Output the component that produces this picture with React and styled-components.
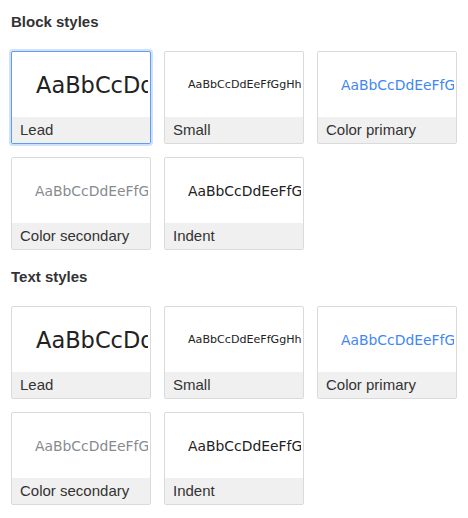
import React from "react";
import styled, { createGlobalStyle, css } from "styled-components";

const Global = createGlobalStyle`
  html, body { margin: 0; padding: 0; background: #ffffff; }
  body { font-family: "Liberation Sans", Arial, sans-serif; color: #333333; }
`;

const Page = styled.div`
  padding: 13px 11px 0 11px;
  display: flex;
  flex-direction: column;
  gap: 18px;
`;

const Section = styled.section`
  display: flex;
  flex-direction: column;
  gap: 20px;
`;

const Heading = styled.h3`
  margin: 0;
  font-family: "Liberation Sans", Arial, sans-serif;
  font-size: 15px;
  line-height: 18px;
  font-weight: 700;
  color: #333333;
`;

const Grid = styled.div`
  display: grid;
  grid-template-columns: repeat(3, 140px);
  gap: 13px;
`;

const Tile = styled.button`
  box-sizing: border-box;
  width: 140px;
  height: 93px;
  padding: 0;
  margin: 0;
  border: 1px solid #dadada;
  border-radius: 2px;
  background: #ffffff;
  display: flex;
  flex-direction: column;
  overflow: hidden;
  cursor: pointer;
  text-align: left;
  ${(p) =>
    p.$active &&
    css`
      border-color: #5f9cf2;
      box-shadow: 0 0 0 2px rgba(120, 170, 245, 0.35);
    `}
`;

const Preview = styled.div`
  box-sizing: border-box;
  height: 65px;
  width: 100%;
  display: flex;
  align-items: center;
  padding: 0 2px 0 ${(p) => (p.$lead ? 24 : 23)}px;
`;

const Sample = styled.span`
  flex: 1;
  min-width: 0;
  overflow: hidden;
  white-space: nowrap;
  font-family: "DejaVu Sans", Verdana, sans-serif;
  font-size: ${(p) => p.$size}px;
  color: ${(p) => p.$color};
`;

const Label = styled.div`
  box-sizing: border-box;
  height: 26px;
  width: 100%;
  background: #f0f0f0;
  padding-left: 8px;
  font-family: "Liberation Sans", Arial, sans-serif;
  font-size: 15px;
  line-height: 26px;
  color: #333333;
  white-space: nowrap;
  overflow: hidden;
`;

const SAMPLE = "AaBbCcDdEeFfGgHhIiJj";

const STYLES = [
  { name: "Lead", size: 22.5, color: "#222222", lead: true },
  { name: "Small", size: 11.1, color: "#222222" },
  { name: "Color primary", size: 13.9, color: "#3f87f5" },
  { name: "Color secondary", size: 13.9, color: "#868b92" },
  { name: "Indent", size: 13.9, color: "#222222" },
];

function StyleGroup({ title, activeFirst }) {
  return (
    <Section>
      <Heading>{title}</Heading>
      <Grid>
        {STYLES.map((s, i) => (
          <Tile key={s.name} $active={activeFirst && i === 0}>
            <Preview $lead={s.lead}>
              <Sample $size={s.size} $color={s.color}>
                {SAMPLE}
              </Sample>
            </Preview>
            <Label>{s.name}</Label>
          </Tile>
        ))}
      </Grid>
    </Section>
  );
}

export default function App() {
  return (
    <>
      <Global />
      <Page>
        <StyleGroup title="Block styles" activeFirst />
        <StyleGroup title="Text styles" />
      </Page>
    </>
  );
}
